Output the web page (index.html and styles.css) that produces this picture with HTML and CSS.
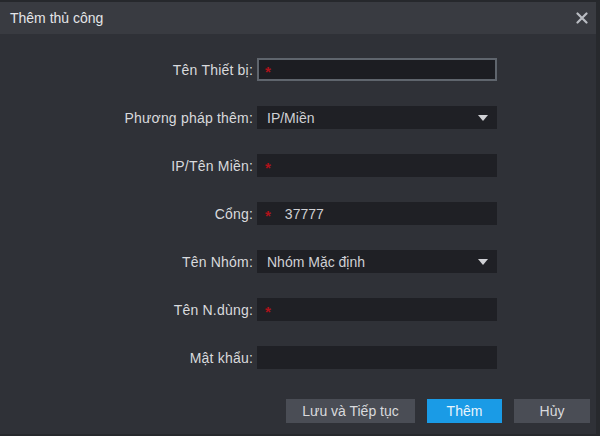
FILE: index.html
```html
<!DOCTYPE html>
<html>
<head>
<meta charset="utf-8">
<link rel="stylesheet" href="styles.css">
</head>
<body>
<div class="dialog">
  <div class="titlebar">
    <span class="title">Thêm thủ công</span>
    <svg class="close" width="12" height="12" viewBox="0 0 12 12"><path d="M1.5 1.5 L10.5 10.5 M10.5 1.5 L1.5 10.5" stroke="#b9bcc2" stroke-width="2.2" stroke-linecap="round"/></svg>
  </div>
  <div class="body">
    <div class="form">
      <div class="row"><label>Tên Thiết bị:</label><div class="field focus"><span class="req">*</span></div></div>
      <div class="row"><label>Phương pháp thêm:</label><div class="field select"><span class="val">IP/Miền</span><span class="arrow"></span></div></div>
      <div class="row"><label>IP/Tên Miền:</label><div class="field"><span class="req">*</span></div></div>
      <div class="row"><label>Cổng:</label><div class="field"><span class="req">*</span><span class="val num">37777</span></div></div>
      <div class="row"><label>Tên Nhóm:</label><div class="field select"><span class="val">Nhóm Mặc định</span><span class="arrow"></span></div></div>
      <div class="row"><label>Tên N.dùng:</label><div class="field"><span class="req">*</span></div></div>
      <div class="row"><label>Mật khẩu:</label><div class="field"></div></div>
    </div>
    <div class="buttons">
      <button class="btn save">Lưu và Tiếp tục</button>
      <button class="btn primary">Thêm</button>
      <button class="btn cancel">Hủy</button>
    </div>
  </div>
</div>
</body>
</html>
```
FILE: styles.css
```css
html, body {
  margin: 0;
  padding: 0;
  background: #2f3137;
}
body {
  width: 600px;
  height: 436px;
  overflow: hidden;
  font-family: "Liberation Sans", Arial, sans-serif;
}
.dialog {
  width: 596px;
  height: 432px;
  border-top: 2px solid #26282c;
  border-right: 4px solid #27292d;
  border-bottom: 2px solid #27292d;
  background: #2f3137;
  display: flex;
  flex-direction: column;
}
.titlebar {
  height: 32px;
  background: #393b41;
  display: flex;
  align-items: center;
  justify-content: space-between;
  padding: 0 8px 0 10px;
}
.title {
  color: #e4e5e8;
  font-size: 14px;
}
.close {
  display: block;
}
.body {
  flex: 1;
  display: flex;
  flex-direction: column;
}
.form {
  display: flex;
  flex-direction: column;
  gap: 25px;
  padding-top: 24px;
}
.row {
  display: flex;
  align-items: center;
  height: 23px;
}
.row label {
  width: 257px;
  text-align: right;
  color: #d9dadd;
  font-size: 14px;
  letter-spacing: 0.2px;
  padding-right: 4px;
  box-sizing: border-box;
}
.field {
  width: 240px;
  height: 23px;
  box-sizing: border-box;
  background: #1f2025;
  display: flex;
  align-items: center;
  padding: 0 8px;
  position: relative;
}
.field.focus {
  border: 2px solid #5f656d;
  background: #1c1d22;
  padding: 0 6px;
}
.req {
  color: #b0121a;
  font-size: 15px;
  font-weight: bold;
  line-height: 1;
  margin-top: 3px;
}
.val {
  color: #cfd0d4;
  font-size: 14px;
  margin-left: 2px;
}
.num {
  margin-left: 14px;
}
.arrow {
  margin-left: auto;
  width: 0;
  height: 0;
  border-left: 5px solid transparent;
  border-right: 5px solid transparent;
  border-top: 6px solid #d0d1d5;
  margin-right: 1px;
}
.buttons {
  display: flex;
  justify-content: flex-end;
  gap: 12px;
  padding: 30px 6px 0 0;
}
.btn {
  height: 24px;
  border: none;
  background: #4a4d55;
  color: #d9dadd;
  font-family: "Liberation Sans", Arial, sans-serif;
  font-size: 14px;
  padding: 0;
}
.save { width: 129px; }
.primary { width: 75px; background: #1a9be6; color: #e8f4fc; }
.cancel { width: 76px; }
```
